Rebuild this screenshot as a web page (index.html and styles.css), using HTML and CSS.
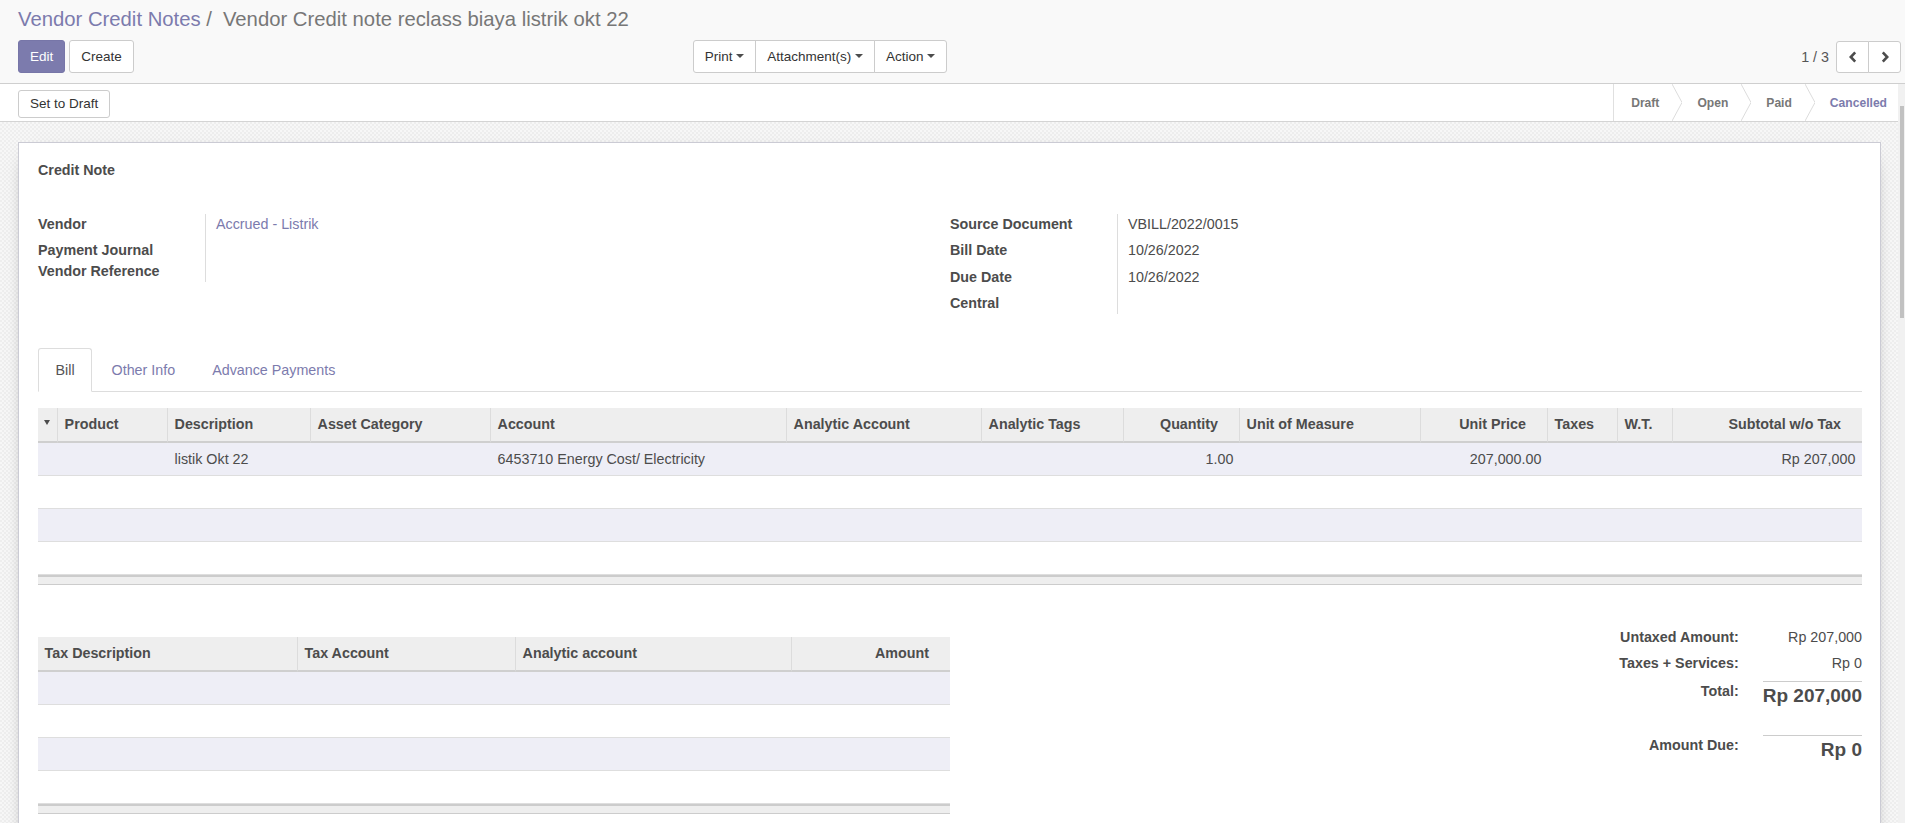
FILE: index.html
```html
<!DOCTYPE html>
<html>
<head>
<meta charset="utf-8">
<title>Vendor Credit Note</title>
<link rel="stylesheet" href="styles.css">
</head>
<body>
<div class="cp">
  <ol class="crumbs">
    <li><a href="#">Vendor Credit Notes</a></li>
    <li class="active">Vendor Credit note reclass biaya listrik okt 22</li>
  </ol>
  <div class="cp-row">
    <div class="cp-buttons">
      <button class="btn btn-primary">Edit</button>
      <button class="btn">Create</button>
    </div>
    <div class="btn-group sidebar">
      <button class="btn">Print<span class="caret"></span></button>
      <button class="btn">Attachment(s)<span class="caret"></span></button>
      <button class="btn">Action<span class="caret"></span></button>
    </div>
    <div class="pager">
      <span class="pager-val">1 / 3</span>
      <div class="btn-group">
        <button class="btn pbtn"><svg width="10" height="12" viewBox="0 0 10 12"><path d="M7.2 1.4 L2.8 6 L7.2 10.6" fill="none" stroke="#4c4c4c" stroke-width="2.6"/></svg></button>
        <button class="btn pbtn"><svg width="10" height="12" viewBox="0 0 10 12"><path d="M2.8 1.4 L7.2 6 L2.8 10.6" fill="none" stroke="#4c4c4c" stroke-width="2.6"/></svg></button>
      </div>
    </div>
  </div>
</div>

<div class="content-wrap">
  <div class="content">
    <div class="statusbar">
      <button class="btn btn-sd">Set to Draft</button>
      <div class="statuses">
        <span class="status first">Draft</span>
        <svg class="chev" viewBox="0 0 10 37" preserveAspectRatio="none"><path d="M0 0 L10 18.5 L0 37" fill="none" stroke="#dcdcdc" stroke-width="1"/></svg>
        <span class="status">Open</span>
        <svg class="chev" viewBox="0 0 10 37" preserveAspectRatio="none"><path d="M0 0 L10 18.5 L0 37" fill="none" stroke="#dcdcdc" stroke-width="1"/></svg>
        <span class="status">Paid</span>
        <svg class="chev" viewBox="0 0 10 37" preserveAspectRatio="none"><path d="M0 0 L10 18.5 L0 37" fill="none" stroke="#dcdcdc" stroke-width="1"/></svg>
        <span class="status current">Cancelled</span>
      </div>
    </div>

    <div class="sheet-bg">
      <div class="sheet">
        <div class="title-label">Credit Note</div>

        <div class="groups">
          <div class="grp">
            <div class="lbl h26">Vendor</div><div class="val h26"><a href="#">Accrued - Listrik</a></div>
            <div class="lbl">Payment Journal</div><div class="val"></div>
            <div class="lbl">Vendor Reference</div><div class="val"></div>
          </div>
          <div class="grp">
            <div class="lbl h26">Source Document</div><div class="val h26">VBILL/2022/0015</div>
            <div class="lbl h27">Bill Date</div><div class="val h27">10/26/2022</div>
            <div class="lbl h26">Due Date</div><div class="val h26">10/26/2022</div>
            <div class="lbl">Central</div><div class="val"></div>
          </div>
        </div>

        <ul class="tabs">
          <li class="active"><a href="#">Bill</a></li>
          <li><a href="#">Other Info</a></li>
          <li><a href="#">Advance Payments</a></li>
        </ul>

        <table class="list lines">
          <thead>
            <tr>
              <th class="c-sort"><span class="sort-caret"></span></th>
              <th class="c-prod">Product</th>
              <th class="c-desc">Description</th>
              <th class="c-asset">Asset Category</th>
              <th class="c-acc">Account</th>
              <th class="c-an">Analytic Account</th>
              <th class="c-tags">Analytic Tags</th>
              <th class="c-qty num">Quantity</th>
              <th class="c-uom">Unit of Measure</th>
              <th class="c-price num">Unit Price</th>
              <th class="c-tax">Taxes</th>
              <th class="c-wt">W.T.</th>
              <th class="c-sub num">Subtotal w/o Tax</th>
            </tr>
          </thead>
          <tbody>
            <tr>
              <td></td><td></td><td>listik Okt 22</td><td></td><td>6453710 Energy Cost/ Electricity</td><td></td><td></td><td class="num">1.00</td><td></td><td class="num">207,000.00</td><td></td><td></td><td class="num">Rp 207,000</td>
            </tr>
            <tr><td colspan="13"></td></tr>
            <tr><td colspan="13"></td></tr>
            <tr><td colspan="13"></td></tr>
          </tbody>
          <tfoot><tr><td colspan="13"></td></tr></tfoot>
        </table>

        <div class="bottom">
          <div class="taxwrap">
            <table class="list tax">
              <thead>
                <tr>
                  <th class="t-desc">Tax Description</th>
                  <th class="t-acc">Tax Account</th>
                  <th class="t-an">Analytic account</th>
                  <th class="t-amt num">Amount</th>
                </tr>
              </thead>
              <tbody>
                <tr><td colspan="4"></td></tr>
                <tr><td colspan="4"></td></tr>
                <tr><td colspan="4"></td></tr>
                <tr><td colspan="4"></td></tr>
              </tbody>
              <tfoot><tr><td colspan="4"></td></tr></tfoot>
            </table>
          </div>
          <div class="totals-wrap">
            <div class="totals">
              <div class="t-lbl r1">Untaxed Amount:</div><div class="t-val r1">Rp 207,000</div>
              <div class="t-lbl r2">Taxes + Services:</div><div class="t-val r2">Rp 0</div>
              <div class="t-lbl">Total:</div><div class="t-val big">Rp 207,000</div>
              <div class="t-lbl due">Amount Due:</div><div class="t-val big due">Rp 0</div>
            </div>
          </div>
        </div>
      </div>
    </div>
  </div>
  <div class="scrollbar"><div class="thumb"></div></div>
</div>
</body>
</html>
```

FILE: styles.css
```css
* { box-sizing: border-box; }
html, body { margin: 0; padding: 0; height: 100%; }
body {
  font-family: "Liberation Sans", Arial, sans-serif;
  font-size: 14.3px;
  line-height: 20px;
  color: #4c4c4c;
  background: #fff;
  overflow: hidden;
}
a { color: #7c7bad; text-decoration: none; }

/* Control panel */
.cp {
  height: 84px;
  background: #f9f9f9;
  border-bottom: 1px solid #cfcfcf;
  padding: 5px 4px 0 18px;
}
.crumbs {
  margin: 0; padding: 0; list-style: none;
  display: flex;
  font-size: 20.3px;
  line-height: 28px;
  height: 28px;
}
.crumbs .active { color: #777; }
.crumbs .active::before { content: "/\00a0"; padding: 0 5.5px; color: #777; }

.cp-row { display: flex; align-items: center; margin-top: 7px; height: 33px; }
.btn {
  font-family: inherit;
  font-size: 13.5px;
  line-height: 19.8px;
  padding: 5.5px 11px;
  border: 1px solid #ccc;
  border-radius: 3px;
  background: #fff;
  color: #333;
  display: inline-flex;
  align-items: center;
  margin: 0;
}
.btn-primary { background: #7c7bad; border-color: #7776a8; color: #fff; }
.cp-buttons { display: flex; gap: 4px; }
.btn-group { display: flex; }
.btn-group .btn { border-radius: 0; margin-left: -1px; }
.btn-group .btn:first-child { border-radius: 3px 0 0 3px; margin-left: 0; }
.btn-group .btn:last-child { border-radius: 0 3px 3px 0; }
.sidebar { margin-left: 559px; }
.caret {
  display: inline-block; width: 0; height: 0;
  border-top: 4.4px solid #4c4c4c;
  border-left: 4.4px solid transparent;
  border-right: 4.4px solid transparent;
  margin-left: 3.7px;
}
.pager { margin-left: auto; display: flex; align-items: center; gap: 7px; font-size: 14.3px; color: #555; }
.pager .pbtn { width: 33px; height: 32px; padding: 0; justify-content: center; }

/* Content */
.content-wrap { display: flex; height: 739px; overflow: hidden; }
.content { flex: 1; min-width: 0; overflow: hidden; }
.scrollbar { width: 7px; background: #f1f1f1; }
.thumb { margin: 22px 0 0 2px; width: 4px; height: 212px; background: #c1c1c1; }

.statusbar {
  display: flex;
  justify-content: space-between;
  height: 38px;
  background: #fff;
  border-bottom: 1px solid #d4d4d4;
  padding-left: 18px;
}
.statusbar .btn-sd { margin-top: 6px; height: 28px; padding: 3.3px 11px; align-self: flex-start; }
.statuses {
  display: flex;
  border-left: 1px solid #e0e0e0;
  font-size: 12.1px;
  font-weight: bold;
  color: #777;
  line-height: 37px;
}
.status { padding: 2px 13px 0 15px; line-height: 35px; white-space: nowrap; }
.status.first { padding-left: 17px; }
.status.current { color: #7c7bad; padding-right: 11px; }
.chev { width: 10px; height: 37px; display: block; flex: none; }

.sheet-bg {
  padding: 20px 17px 40px 18px;
  background-color: #f3f3f3;
  background-image: repeating-conic-gradient(#eeeeee 0% 25%, #f7f7f7 0% 50%);
  background-size: 4px 4px;
}
.sheet {
  background: #fff;
  border: 1px solid #cbcbd4;
  box-shadow: 0 5px 20px -15px #000;
  padding: 17px 18px 40px 19px;
}
.title-label { font-weight: bold; line-height: 20px; margin-bottom: 33.5px; }

.groups { display: flex; }
.grp {
  width: 50%;
  display: grid;
  grid-template-columns: 168px 1fr;
  align-content: start;
}
.lbl { font-weight: bold; border-right: 1px solid #ddd; height: 21px; white-space: nowrap; }
.val { padding-left: 10px; height: 21px; }
.h26 { height: 26px; }
.h27 { height: 27px; }

.tabs {
  list-style: none;
  margin: 34.5px 0 0;
  padding: 0;
  display: flex;
  border-bottom: 1px solid #ddd;
}
.tabs li { margin-bottom: -1px; margin-right: 2px; }
.tabs a {
  display: block;
  padding: 11px 16.5px;
  border: 1px solid transparent;
  border-radius: 3px 3px 0 0;
  line-height: 20px;
}
.tabs .active a { color: #555; background: #fff; border-color: #ddd #ddd transparent; }

/* Lists */
.list { width: 100%; border-collapse: separate; border-spacing: 0; table-layout: fixed; margin-top: 16px; }
.list th {
  background: #eee;
  font-weight: bold;
  text-align: left;
  height: 35px;
  padding: 5.5px 6.6px 0;
  vertical-align: top;
  border-bottom: 2px solid #cfcfcf;
  border-right: 1px solid #dcdcdc;
  white-space: nowrap;
  overflow: hidden;
}
.list th:last-child { border-right: 0; }
.list th.num { text-align: right; padding-right: 21px; }
.list td {
  height: 33px;
  padding: 5.5px 6.6px 6.5px;
  border-bottom: 1px solid #dedede;
  vertical-align: top;
  white-space: nowrap;
}
.list td.num { text-align: right; }
.list tbody tr:nth-child(odd) td { background: #eeeef6; }
.list tfoot td {
  height: 10px;
  padding: 0;
  background: #eee;
  border-top: 2px solid #cccccc;
  border-bottom: 1px solid #cccccc;
}
.sort-caret {
  display: inline-block; width: 0; height: 0;
  border-top: 5px solid #4c4c4c;
  border-left: 3.5px solid transparent;
  border-right: 3.5px solid transparent;
  margin-top: 7px;
  vertical-align: top;
}
.list th.c-sort { padding: 5px 0 0 6px; }
.c-sort { width: 20px; }
.c-prod { width: 110px; }
.c-desc { width: 143px; }
.c-asset { width: 180px; }
.c-acc { width: 296px; }
.c-an { width: 195px; }
.c-tags { width: 142px; }
.c-qty { width: 116px; }
.c-uom { width: 181px; }
.c-price { width: 127px; }
.c-tax { width: 70px; }
.c-wt { width: 55px; }
.c-sub { width: 189px; }

.t-desc { width: 260px; }
.t-acc { width: 218px; }
.t-an { width: 276px; }
.t-amt { width: 158px; }

.bottom { display: flex; margin-top: 42px; }
.taxwrap { width: 50%; }
.taxwrap .list { margin-top: 10px; }
.totals-wrap { width: 50%; display: flex; justify-content: flex-end; }
.totals {
  display: grid;
  grid-template-columns: auto auto;
  column-gap: 24px;
  align-content: start;
}
.t-lbl { font-weight: bold; text-align: right; line-height: 20px; white-space: nowrap; }
.t-val { text-align: right; line-height: 20px; white-space: nowrap; }
.r1 { padding-bottom: 6px; }
.r2 { padding-bottom: 8px; }
.t-val.big { font-size: 19px; font-weight: bold; line-height: 28px; border-top: 1px solid #ccc; }
.due { margin-top: 25px; }
```
